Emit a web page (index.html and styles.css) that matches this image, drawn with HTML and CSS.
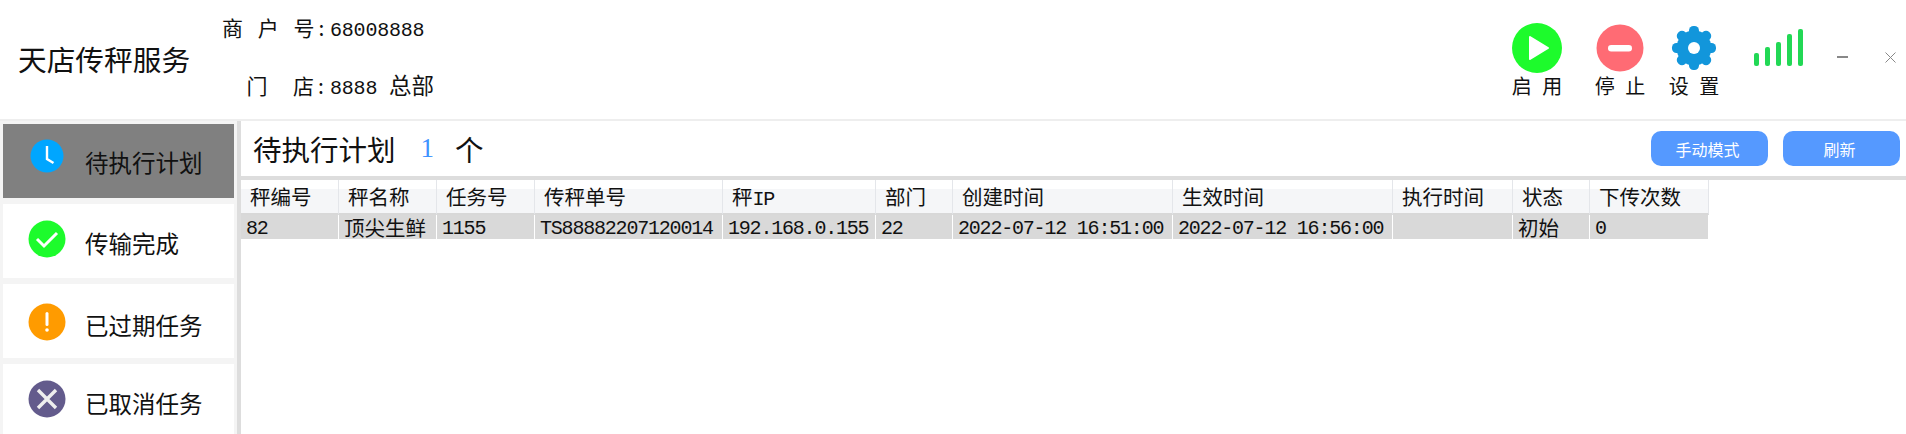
FILE: index.html
```html
<!DOCTYPE html>
<html lang="zh-CN">
<head>
    <meta charset="UTF-8">
    <title>天店传秤服务</title>
    <link rel="stylesheet" href="styles.css">
</head>
<body>
    <header class="top-bar">
        <div class="app-title">天店传秤服务</div>
        <div class="shop-info">
            <div class="info-row"><span class="info-label">商 户 号<span class="colon">:</span></span><span class="lat">68008888</span></div>
            <div class="info-row"><span class="info-label">门  店<span class="colon">:</span></span><span class="lat">8888 </span><span class="shop-name">总部</span></div>
        </div>
        <div class="tool tool-start">
            <svg width="50" height="50" viewBox="0 0 50 50"><circle cx="25" cy="25" r="25" fill="#1dfb2c"/><path d="M18 14 L36 25 L18 36 Z" fill="#fff" stroke="#fff" stroke-width="2" stroke-linejoin="round"/></svg>
            <span class="tool-name">启 用</span>
        </div>
        <div class="tool tool-stop">
            <svg width="50" height="50" viewBox="0 0 50 50"><circle cx="25" cy="25" r="23.5" fill="#ff6b74"/><rect x="13" y="22" width="24" height="6.5" rx="3.2" fill="#fff"/></svg>
            <span class="tool-name">停 止</span>
        </div>
        <div class="tool tool-set">
            <svg width="50" height="50" viewBox="0 0 50 50">
                <g fill="#1296db">
                    <circle cx="25" cy="25" r="17.5"/>
                    <rect x="20" y="3" width="10" height="44" rx="4.5"/>
                    <rect x="20" y="3" width="10" height="44" rx="4.5" transform="rotate(45 25 25)"/>
                    <rect x="20" y="3" width="10" height="44" rx="4.5" transform="rotate(90 25 25)"/>
                    <rect x="20" y="3" width="10" height="44" rx="4.5" transform="rotate(135 25 25)"/>
                </g>
                <circle cx="25" cy="25" r="6" fill="#fff"/>
            </svg>
            <span class="tool-name">设 置</span>
        </div>
        <div class="signal">
            <i class="bar bar-1"></i><i class="bar bar-2"></i><i class="bar bar-3"></i><i class="bar bar-4"></i><i class="bar bar-5"></i>
        </div>
        <div class="win-min"></div>
        <svg class="win-close" width="11" height="11" viewBox="0 0 11 11"><path d="M0.5 0.5 L10.5 10.5 M10.5 0.5 L0.5 10.5" stroke="#888" stroke-width="1" fill="none"/></svg>
    </header>

    <div class="main">
        <nav class="side-menu">
            <div class="menu-item active">
                <svg class="menu-icon" width="38" height="38" viewBox="0 0 38 38"><circle cx="19" cy="19" r="16.5" fill="#00a6ff"/><path d="M19 9 L19 22 L25.5 26" fill="none" stroke="#fff" stroke-width="2.4"/></svg>
                <span class="menu-text">待执行计划</span>
            </div>
            <div class="menu-item item-done">
                <svg class="menu-icon" width="38" height="38" viewBox="0 0 38 38"><circle cx="19" cy="19" r="18.5" fill="#1dfb2c"/><path d="M9 19 L16 26 L29 13" fill="none" stroke="#fff" stroke-width="3"/></svg>
                <span class="menu-text">传输完成</span>
            </div>
            <div class="menu-item item-over">
                <svg class="menu-icon" width="38" height="38" viewBox="0 0 38 38"><circle cx="19" cy="19" r="18.5" fill="#ff9b00"/><rect x="17.5" y="9" width="3" height="14" rx="1.5" fill="#fff"/><circle cx="19" cy="27" r="1.8" fill="#fff"/></svg>
                <span class="menu-text">已过期任务</span>
            </div>
            <div class="menu-item item-done">
                <svg class="menu-icon" width="38" height="38" viewBox="0 0 38 38"><circle cx="19" cy="19" r="18.5" fill="#635b8c"/><path d="M10 10 L28 28 M28 10 L10 28" fill="none" stroke="#eee" stroke-width="3.4"/></svg>
                <span class="menu-text">已取消任务</span>
            </div>
        </nav>

        <section class="content">
            <div class="plan-head">
                <span class="plan-title">待执行计划</span>
                <span class="plan-count">1</span>
                <span class="plan-unit">个</span>
                <button class="btn btn-mode">手动模式</button>
                <button class="btn">刷新</button>
            </div>
            <table class="plan-table">
                <colgroup>
                    <col class="c98"><col class="c98"><col class="c98"><col class="c188"><col class="c153"><col class="c77"><col class="c220"><col class="c220"><col class="c120"><col class="c77"><col class="c119">
                </colgroup>
                <thead>
                    <tr>
                        <th>秤编号</th><th>秤名称</th><th>任务号</th><th>传秤单号</th><th>秤<span class="lat">IP</span></th><th>部门</th><th>创建时间</th><th>生效时间</th><th>执行时间</th><th>状态</th><th>下传次数</th>
                    </tr>
                </thead>
                <tbody>
                    <tr>
                        <td><span class="lat">82</span></td>
                        <td>顶尖生鲜</td>
                        <td><span class="lat">1155</span></td>
                        <td><span class="lat">TS88882207120014</span></td>
                        <td><span class="lat">192.168.0.155</span></td>
                        <td><span class="lat">22</span></td>
                        <td><span class="lat">2022-07-12 16:51:00</span></td>
                        <td><span class="lat">2022-07-12 16:56:00</span></td>
                        <td></td>
                        <td>初始</td>
                        <td><span class="lat">0</span></td>
                    </tr>
                </tbody>
            </table>
        </section>
    </div>
</body>
</html>
```

FILE: styles.css
```css
html, body {
    margin: 0;
    height: 434px;
    overflow: hidden;
    background-color: #fff;
}
body {
    font-family: "Noto Sans CJK SC", sans-serif;
    color: #111;
}
.lat {
    font-family: "Liberation Mono", monospace;
    font-size: 20px;
    letter-spacing: -1.2px;
    line-height: 1;
}
.top-bar {
    display: flex;
    height: 119px;
    border-bottom: 2px solid #eee;
}
.app-title {
    margin: 39px 0 0 18px;
    font-size: 28.7px;
    line-height: 40px;
    width: 204px;
}
.info-row {
    height: 57px;
    line-height: 30px;
    padding-top: 12px;
    font-size: 21px;
    white-space: pre;
    box-sizing: border-box;
}
.info-row .lat {
    letter-spacing: -0.2px;
}
.info-label {
    display: inline-block;
    width: 108px;
    text-align: right;
    word-spacing: 10px;
}
.info-row + .info-row .info-label {
    word-spacing: 8px;
}
.colon {
    display: inline-block;
    width: 12px;
    padding-left: 4px;
    text-align: left;
}
.shop-name {
    font-size: 22.5px;
}
.shop-info {
    width: 1285px;
}
.tool {
    width: 60px;
    margin-top: 23px;
    display: flex;
    flex-direction: column;
    align-items: center;
}
.tool-stop {
    margin-left: 23px;
}
.tool-set {
    margin-left: 14px;
}
.tool-name {
    margin-top: -1px;
    font-size: 20px;
    line-height: 28px;
    white-space: pre;
    word-spacing: 6px;
}
.signal {
    display: flex;
    align-items: flex-end;
    gap: 6px;
    height: 37px;
    margin: 29px 0 0 30px;
}
.bar {
    display: block;
    width: 5px;
    background-color: #22d855;
    border-radius: 2px;
}
.bar-1 { height: 13px; }
.bar-2 { height: 19px; }
.bar-3 { height: 24px; }
.bar-4 { height: 32px; }
.bar-5 { height: 37px; }
.win-min {
    width: 11px;
    height: 2px;
    margin: 56px 0 0 34px;
    background-color: #888;
}
.win-close {
    margin: 52px 0 0 37px;
}
.main {
    display: flex;
    height: 313px;
}
.side-menu {
    flex: 0 0 241px;
    padding: 3px 3px 0 3px;
    box-sizing: border-box;
    background-color: #f4f4f4;
    display: flex;
    flex-direction: column;
    gap: 6px;
    overflow: hidden;
    border-right: 4px solid #ddd;
}
.menu-item {
    flex: 0 0 74px;
    background-color: #fff;
    display: flex;
    padding-left: 25px;
    box-sizing: border-box;
}
.menu-item.active {
    background-color: #808080;
}
.menu-icon {
    margin-top: 13px;
}
.menu-text {
    margin: 19px 0 0 19px;
    font-size: 23.5px;
    line-height: 38px;
    white-space: nowrap;
}
.item-done .menu-icon {
    margin-top: 16px;
}
.item-done .menu-text {
    margin-top: 20px;
}
.item-over .menu-icon {
    margin-top: 19px;
}
.item-over .menu-text {
    margin-top: 22px;
}
.content {
    flex: 1;
    min-width: 0;
}
.plan-head {
    height: 55px;
    border-bottom: 4px solid #ddd;
    display: flex;
    align-items: center;
    padding: 0 6px 0 12px;
}
.plan-title {
    font-size: 28.5px;
}
.plan-count {
    margin-left: 25px;
    font-family: "Liberation Serif", serif;
    font-size: 27px;
    color: #3f93ff;
}
.plan-unit {
    margin-left: 21px;
    font-size: 28.5px;
    flex: 1;
}
.btn {
    width: 117px;
    height: 35px;
    margin-left: 15px;
    border: none;
    border-radius: 10px;
    background-color: #5599ff;
    color: #fff;
    font-family: "Noto Sans CJK SC", sans-serif;
    font-size: 16px;
    padding: 0 4px 0 0;
}
.plan-table {
    border-collapse: separate;
    border-spacing: 0;
    table-layout: fixed;
    width: 1468px;
}
.c98 { width: 98px; }
.c188 { width: 188px; }
.c153 { width: 153px; }
.c77 { width: 77px; }
.c220 { width: 220px; }
.c120 { width: 120px; }
.c119 { width: 119px; }
.plan-table th {
    height: 33px;
    padding: 0 0 0 9px;
    text-align: left;
    font-size: 20.5px;
    font-weight: normal;
    line-height: 33px;
    background: linear-gradient(#fff 0, #fff 9px, #f5f6f8 9px);
    border-right: 1px solid #e4e6ea;
    border-bottom: 2px solid #d8d8d8;
    white-space: nowrap;
}
.plan-table td {
    height: 24px;
    padding: 0 0 0 5px;
    font-size: 20.5px;
    line-height: 20px;
    background-color: #d9d9d9;
    border-right: 1px solid #fff;
    white-space: nowrap;
}
```
